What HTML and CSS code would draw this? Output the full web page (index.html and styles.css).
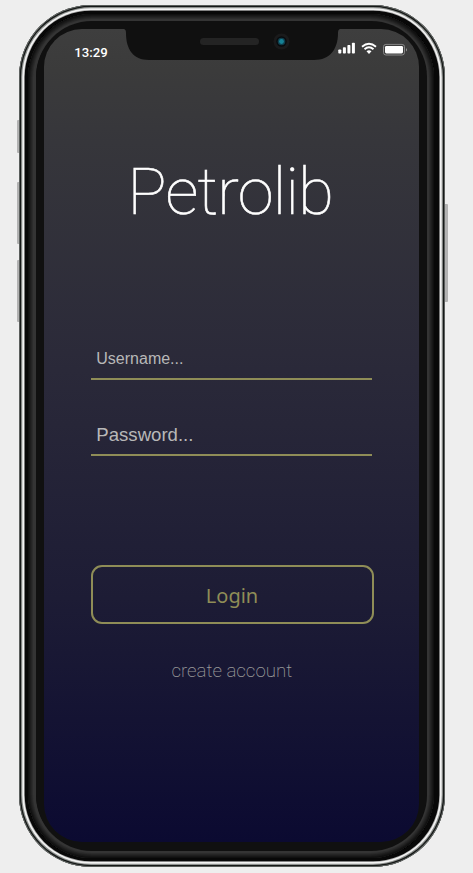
FILE: index.html
```html
<!DOCTYPE html>
<html lang="en">
<head>
<meta charset="utf-8">
<title>Petrolib</title>
<link rel="stylesheet" href="styles.css">
</head>
<body>
<div class="phone">
  <span class="key key-mute"></span>
  <span class="key key-up"></span>
  <span class="key key-down"></span>
  <span class="key key-power"></span>
  <div class="rim"><div class="bevel"><div class="bezel">
    <main class="screen">
      <div class="notch">
        <svg width="216" height="32" viewBox="0 0 216 32">
          <path d="M0 0Q2 .5 2 4C2 20 9 31 25 31H190C206 31 214 20 214 4Q214 .5 216 0Z" fill="#101010"/>
          <rect x="76" y="9" width="59" height="7" rx="3.5" fill="#242424"/>
          <circle cx="157.500" cy="12.500" r="8" fill="#1a1a1b"/>
          <circle cx="157.500" cy="12.500" r="5.200" fill="#080b0d"/>
          <circle cx="157.500" cy="12.500" r="3.800" fill="#103d4b"/>
          <circle cx="157.500" cy="12.500" r="2.400" fill="#168296"/>
        </svg>
      </div>
      <header class="status">
        <time class="clock">13:29</time>
        <svg class="signals" width="70" height="16" viewBox="0 0 70 16">
          <g fill="#fff">
            <rect x=".3" y="7.500" width="3" height="4" rx=".8"/>
            <rect x="4.900" y="5.300" width="3" height="6.200" rx=".8"/>
            <rect x="9.400" y="3" width="3" height="8.500" rx=".8"/>
            <rect x="13.900" y=".8" width="3" height="10.700" rx=".8"/>
            <path d="M28.500 9.200Q31 7.200 33.500 9.200L31 12Z"/>
            <rect x="47" y="3.900" width="18" height="7.600" rx="1.400"/>
          </g>
          <g fill="none" stroke="#fff" stroke-width="1.900">
            <path d="M24 4.700Q31-1.300 38 4.700"/>
            <path d="M26.500 7.300Q31 3.300 35.500 7.300"/>
          </g>
          <rect x="45.500" y="2.400" width="21" height="10.600" rx="2.400" fill="none" stroke="#999" stroke-width=".8"/>
          <path d="M68 5.900Q70 7.700 68 9.500Z" fill="#999"/>
        </svg>
      </header>
      <h1 class="brand">Petrolib</h1>
      <form class="login">
        <input class="field" type="text" placeholder="Username..." aria-label="Username">
        <input class="field field-password" type="password" placeholder="Password..." aria-label="Password">
        <button class="submit" type="button">Login</button>
      </form>
      <a class="create">create account</a>
    </main>
  </div></div></div>
</div>
</body>
</html>
```
FILE: styles.css
```css
* { box-sizing: border-box; }
body {
  margin: 0;
  height: 873px;
  overflow: hidden;
  background: #eee;
  font-family: Roboto, sans-serif;
}
.phone {
  position: relative;
  width: 425.5px;
  height: 862px;
  margin: 5px 0 0 19.3px;
}
.key { position: absolute; width: 4px; background: #b2b2b2; border-radius: 1px; }
.key-mute { left: -2.3px; top: 115px; height: 33px; }
.key-up { left: -2.3px; top: 177px; height: 62px; }
.key-down { left: -2.3px; top: 255px; height: 62px; }
.key-power { right: -3.2px; top: 199px; height: 98px; }
.rim {
  position: relative;
  height: 100%;
  padding: 9px 11px 9px 9px;
  border-radius: 72px;
  background: #080808;
  box-shadow:
    inset 0 0 0 .8px #6d716f,
    inset 0 0 0 2.1px #151817,
    inset 0 0 0 3.3px #8c8f8d,
    inset 0 0 0 5px #f3f3f3,
    inset 0 0 0 5.700px #aaa;
}
.bevel {
  height: 100%;
  padding: 7px 7px 7px 8px;
  border-radius: 64px;
  background: #111;
  box-shadow:
    inset 0 0 0 1px #101010,
    inset 0 0 0 2px #171717,
    inset 0 0 0 3px #1e1e1e,
    inset 0 0 0 4px #252525,
    inset 0 0 0 5px #2c2c2c,
    inset 0 0 0 8px #343434;
}
.bezel {
  height: 100%;
  padding: 8px 7.500px 9px 8px;
  border-radius: 56px;
  background: #101010;
}
.screen {
  position: relative;
  display: flex;
  flex-direction: column;
  height: 100%;
  padding: 0 47px;
  overflow: hidden;
  border-radius: 38px;
  background: linear-gradient(#3e3e3e 0%, #3b3b3b 5%, #36363b 14%, #2a2939 42%, #1d1c35 70%, #0b0a31 100%);
}
.notch { position: absolute; top: 0; left: 80px; height: 32px; }
.notch svg { display: block; }
.status {
  display: flex;
  justify-content: space-between;
  height: 36px;
  margin: 0 -36px 0 -17px;
  padding-top: 13px;
}
.clock { padding-top: 3px; color: #fff; font-size: 13.200px; font-weight: 500; line-height: 16px; }
.brand {
  margin: 89px 3px 0 0;
  color: #fff;
  font-size: 65px;
  font-weight: 100;
  letter-spacing: -.7px;
  line-height: 76px;
  text-align: center;
  white-space: nowrap;
  -webkit-text-stroke: .6px #fff;
}
.login { display: flex; flex-direction: column; margin-top: 107px; }
.field {
  width: 281px;
  height: 43px;
  margin: 0 0 33px;
  padding: 2px 5px 0;
  border: 0;
  border-bottom: 2px solid #8f8d57;
  border-radius: 0;
  outline: 0;
  background: none;
  color: #b8b8b8;
  font-family: "Liberation Sans", Arial, sans-serif;
  font-size: 16px;
}
.field-password { font-size: 18.600px; }
.field::placeholder { color: #b8b8b8; opacity: 1; }
.submit {
  width: 283px;
  height: 59px;
  margin: 76px 0 0 -.8px;
  padding: 2px 0 0;
  border: 2px solid #8f8d57;
  border-radius: 11px;
  background: none;
  color: #8f8d57;
  font-family: "Noto Sans", sans-serif;
  font-size: 20px;
}
.create {
  margin-top: 35px;
  color: #999;
  font-size: 18.700px;
  font-weight: 200;
  line-height: 24px;
  text-align: center;
}
```
